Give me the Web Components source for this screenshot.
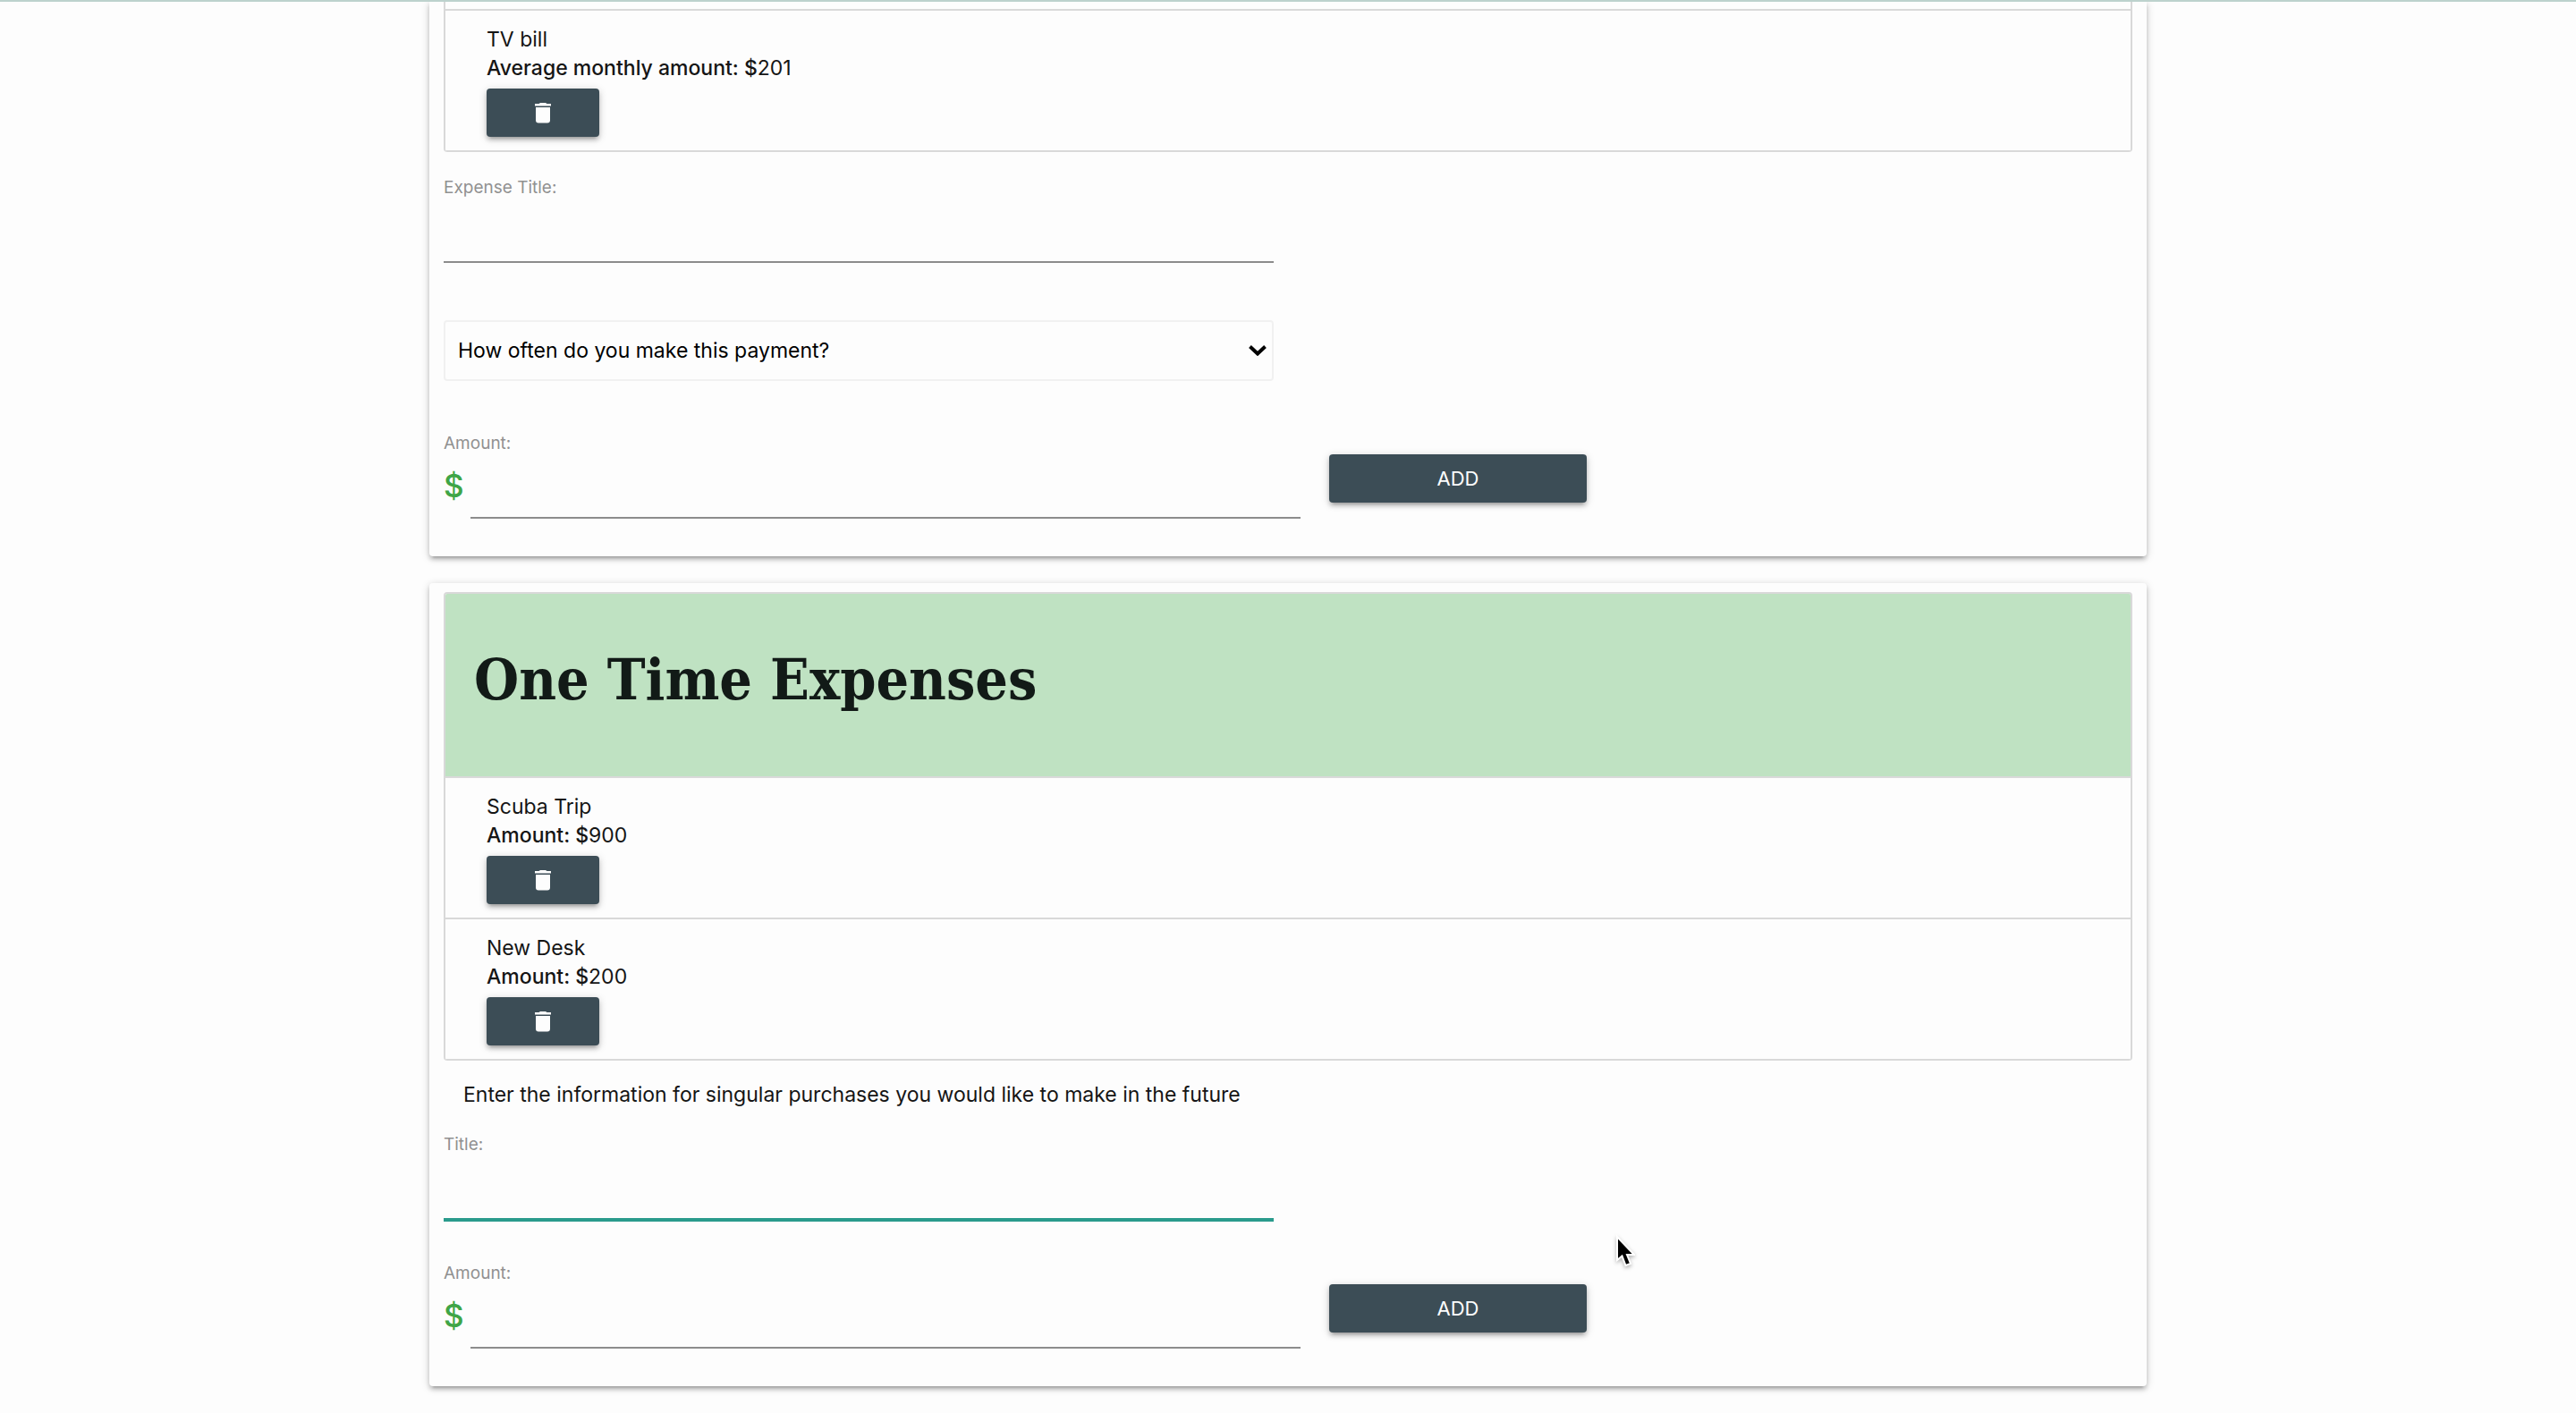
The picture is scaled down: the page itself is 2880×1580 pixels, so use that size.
<!DOCTYPE html>
<html lang="en">
<head>
<meta charset="utf-8">
<meta name="viewport" content="width=device-width, initial-scale=1">
<title>Expenses</title>
<style>
  html { background: #fdfdfd; }
  body { margin: 0; font: 400 23px/32px Inter, "Liberation Sans", sans-serif; color: #151515; }
</style>
</head>
<body>
<budget-page>
  <budget-card continued>
    <expense-list continued>
      <expense-item name="TV bill" label="Average monthly amount:" amount="201"></expense-item>
    </expense-list>
    <expense-form>
      <text-field label="Expense Title:"></text-field>
      <choice-field label="How often do you make this payment?"></choice-field>
      <amount-row label="Amount:"></amount-row>
    </expense-form>
  </budget-card>
  <budget-card>
    <expense-list heading="One Time Expenses">
      <expense-item name="Scuba Trip" label="Amount:" amount="900"></expense-item>
      <expense-item name="New Desk" label="Amount:" amount="200"></expense-item>
    </expense-list>
    <expense-form compact>
      <span slot="intro">Enter the information for singular purchases you would like to make in the future</span>
      <text-field label="Title:" active></text-field>
      <amount-row label="Amount:"></amount-row>
    </expense-form>
  </budget-card>
  <mouse-pointer slot="pointer"></mouse-pointer>
</budget-page>

<script>
const base = `
  *, *::before, *::after { box-sizing: border-box; }
  .raised { box-shadow: 0 4px 4px rgba(0,0,0,.14), 0 6px 2px -4px rgba(0,0,0,.12), 0 2px 10px rgba(0,0,0,.2); }
  button { display: flex; align-items: center; justify-content: center; height: 54px; padding: 0; border: 0;
    border-radius: 4px; background: #3c4d56; color: #fdfdfd; font: inherit; font-size: 22px; cursor: pointer; }
  .caption { display: block; height: 30px; font-size: 19px; line-height: 30px; color: #919191; }
  input { display: block; width: 100%; height: 69px; margin: 0; padding: 0; border: 0; border-bottom: 2px solid #8c8c8c;
    border-radius: 0; background: transparent; font: inherit; outline: none; }
`;

class Part extends HTMLElement {
  connectedCallback() {
    if (this.shadowRoot) return;
    this.attachShadow({ mode: "open" }).innerHTML = `<style>${base}${this.css()}</style>${this.markup()}`;
  }
  text(name) { return this.getAttribute(name) || ""; }
}

customElements.define("budget-page", class extends Part {
  css() { return `
    :host { display: block; position: relative; overflow: hidden; min-height: 100vh; }
    .bar { position: relative; z-index: 1; height: 2px; background: #bdd2cd; }
    main { display: flex; flex-direction: column; gap: 30px; width: 66.6667%; margin: 0 auto; padding-bottom: 30px; }
  `; }
  markup() { return `<div class="bar"></div><main><slot></slot></main><slot name="pointer"></slot>`; }
});

customElements.define("budget-card", class extends Part {
  css() { return `
    :host { display: block; }
    section { padding: 10px 16px 42px; border-radius: 4px; background: #fdfdfd; }
    :host([continued]) section { padding-top: 0; border-radius: 0 0 4px 4px; }
  `; }
  markup() { return `<section class="raised"><slot></slot></section>`; }
});

customElements.define("expense-list", class extends Part {
  css() { return `
    :host { display: block; }
    .list { border: 2px solid #d9d9d9; border-bottom: 0; border-radius: 4px; overflow: hidden; }
    :host([continued]) .list { border-top: 0; border-radius: 0 0 4px 4px; }
    :host([continued]) .list::before { content: ""; display: block; height: 10px; border-bottom: 2px solid #d9d9d9; }
    header { padding: 56px 32px 68px; border-bottom: 2px solid #d9d9d9; background: #bfe2c2; }
    h2 { margin: 0; font: 700 64px/80px "DejaVu Serif Condensed", "DejaVu Serif", serif; color: #121a17; }
  `; }
  markup() {
    const h = this.text("heading");
    return `<div class="list">${h ? `<header><h2>${h}</h2></header>` : ""}<slot></slot></div>`;
  }
});

customElements.define("expense-item", class extends Part {
  css() { return `
    :host { display: block; }
    article { display: flex; flex-direction: column; align-items: flex-start; padding: 16px 46px 15px; border-bottom: 2px solid #d9d9d9; }
    b { font-weight: 500; }
    button { width: 126px; margin-top: 7px; }
    svg { width: 18px; height: 24px; }
  `; }
  markup() { return `<article>
    <span>${this.text("name")}</span>
    <span><b>${this.text("label")} $</b>${this.text("amount")}</span>
    <button class="raised" type="button" aria-label="Delete ${this.text("name")}">
      <svg viewBox="0 0 18 24" fill="#fdfdfd" aria-hidden="true"><path d="M0 2H4.500L6 1H12L13.500 2H18V4.500H0ZM1 6H17V20.500Q17 23.500 14 23.500H4Q1 23.500 1 20.500Z"/></svg>
    </button></article>`; }
});

customElements.define("expense-form", class extends Part {
  css() { return `
    :host { display: block; }
    form { display: flex; flex-direction: column; gap: 55px; padding-top: 25px; }
    :host([compact]) form { gap: 45px; }
    ::slotted([slot="intro"]) { display: block; margin-top: 22px; padding-left: 22px; }
  `; }
  markup() { return `<slot name="intro"></slot><form><slot></slot></form>`; }
});

customElements.define("text-field", class extends Part {
  css() { return `
    :host { display: block; width: calc(50% - 16px); }
    :host([active]) input { border-color: #2a9b8c; box-shadow: 0 2px 0 #2a9b8c; }
  `; }
  markup() { return `<label class="caption" for="value">${this.text("label")}</label><input id="value" type="text">`; }
});

customElements.define("choice-field", class extends Part {
  css() { return `
    :host { display: grid; width: calc(50% - 16px); margin-top: 9px; align-items: center; }
    select, svg { grid-area: 1 / 1; }
    select { appearance: none; width: 100%; height: 68px; padding: 0 14px; border: 2px solid #f1f1f1; border-radius: 4px;
      background: transparent; color: #000; font: inherit; }
    svg { justify-self: end; width: 20px; height: 12px; margin-right: 8px; pointer-events: none; }
  `; }
  markup() { return `<select aria-label="Payment frequency"><option>${this.text("label")}</option></select>
    <svg viewBox="0 0 20 12" fill="none" stroke="#000" stroke-width="4" aria-hidden="true"><path d="M1.500 1.500 10 9.500 18.500 1.500"/></svg>`; }
});

customElements.define("amount-row", class extends Part {
  css() { return `
    :host { display: flex; align-items: flex-end; gap: 32px; }
    .field { width: calc(50% + 14px); }
    .entry { display: flex; align-items: flex-start; }
    .sign { flex: none; width: 30px; font-size: 35px; line-height: 64px; font-weight: 500; color: #3fa547; }
    button { width: 288px; margin-bottom: 18px; }
  `; }
  markup() { return `<div class="field"><label class="caption" for="amount">${this.text("label")}</label>
    <div class="entry"><span class="sign">$</span><input id="amount" type="text" inputmode="decimal"></div></div>
    <button class="raised" type="button">ADD</button>`; }
});

customElements.define("mouse-pointer", class extends Part {
  css() { return `
    :host { position: absolute; left: 62.65%; top: 1380px; pointer-events: none; }
    svg { display: block; width: 24px; height: 38px; filter: drop-shadow(0 2px 2px rgba(0,0,0,.3)); }
  `; }
  markup() { return `<svg viewBox="0 0 24 38" aria-hidden="true"><path d="M4 3V29L9.500 24.500 13.500 35 19 33 15 23H23Z" fill="#000" stroke="#fff" stroke-width="2"/></svg>`; }
});
</script>
</body>
</html>
